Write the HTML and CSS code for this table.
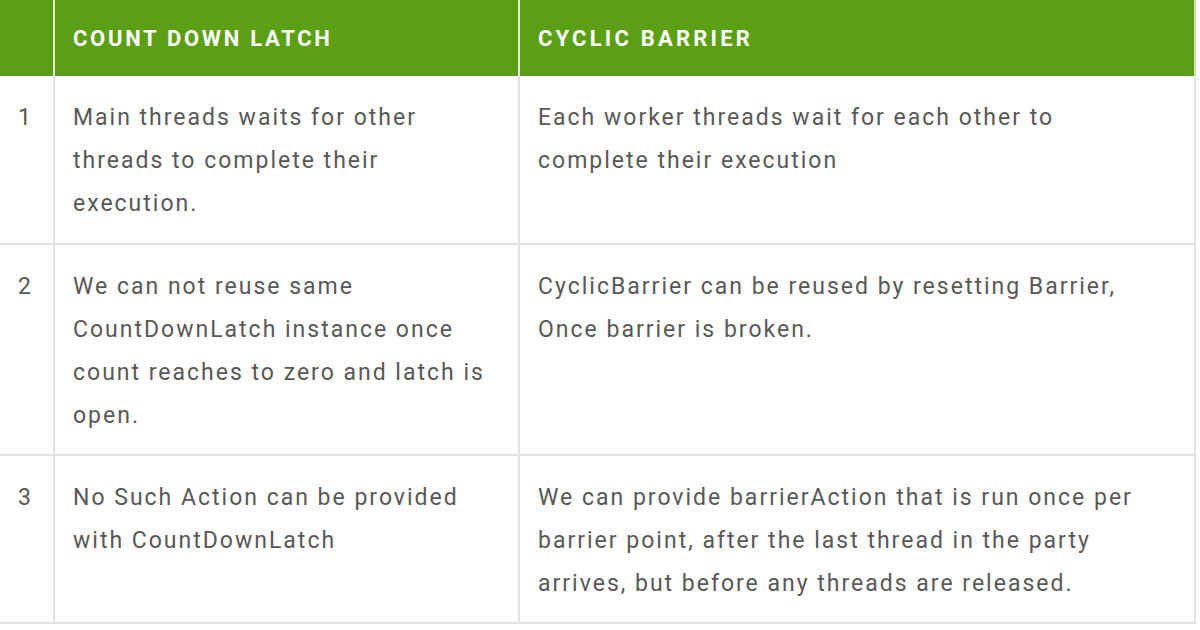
FILE: index.html
```html
<!DOCTYPE html>
<html lang="en">
<head>
<meta charset="utf-8">
<title>CountDownLatch vs CyclicBarrier</title>
<link rel="stylesheet" href="styles.css">
</head>
<body>
<table class="cmp">
  <colgroup>
    <col class="c-num">
    <col class="c-a">
    <col class="c-b">
  </colgroup>
  <thead>
    <tr>
      <th class="num"></th>
      <th class="h-a">COUNT DOWN LATCH</th>
      <th class="h-b">CYCLIC BARRIER</th>
    </tr>
  </thead>
  <tbody>
    <tr class="r1">
      <td class="num">1</td>
      <td>Main threads waits for other<br>threads to complete their<br>execution.</td>
      <td>Each worker threads wait for each other to<br>complete their execution</td>
    </tr>
    <tr class="r2">
      <td class="num">2</td>
      <td>We can not reuse same<br>CountDownLatch instance once<br>count reaches to zero and latch is<br>open.</td>
      <td>CyclicBarrier can be reused by resetting Barrier,<br>Once barrier is broken.</td>
    </tr>
    <tr class="r3">
      <td class="num">3</td>
      <td>No Such Action can be provided<br>with CountDownLatch</td>
      <td>We can provide barrierAction that is run once per<br>barrier point, after the last thread in the party<br>arrives, but before any threads are released.</td>
    </tr>
  </tbody>
</table>
</body>
</html>
```
FILE: styles.css
```css
html, body {
  margin: 0;
  padding: 0;
  background: #ffffff;
}

body {
  font-family: Roboto, "Liberation Sans", sans-serif;
}

.cmp {
  width: 1195px;
  table-layout: fixed;
  border-collapse: collapse;
}

.c-num { width: 54px; }
.c-a { width: 465px; }
.c-b { width: 676px; }

.cmp th {
  height: 76px;
  padding: 0 18px;
  background: #5b9f15;
  color: #ffffff;
  text-align: left;
  font-size: 22px;
  font-weight: 700;
  border-right: 2px solid #e4f0d8;
  box-sizing: border-box;
  white-space: nowrap;
}

.cmp th.h-a {
  letter-spacing: 2.7px;
}

.cmp th.h-b {
  border-right: 2px solid #cfe3bb;
  letter-spacing: 3.2px;
}

.cmp td {
  vertical-align: top;
  padding: 20px 18px 16px 18px;
  font-size: 23px;
  line-height: 43px;
  letter-spacing: 2px;
  color: #585858;
  border: 2px solid #e2e2e2;
  border-top: 0;
  white-space: nowrap;
  box-sizing: border-box;
}

.cmp tr + tr td {
  border-top: 2px solid #e2e2e2;
}

.cmp td.num {
  border-left: 0;
  padding-left: 18px;
  padding-right: 0;
  letter-spacing: 0;
}

.r1 td { height: 168px; }
.r2 td { height: 211px; }
.r3 td { height: 168px; }
```
